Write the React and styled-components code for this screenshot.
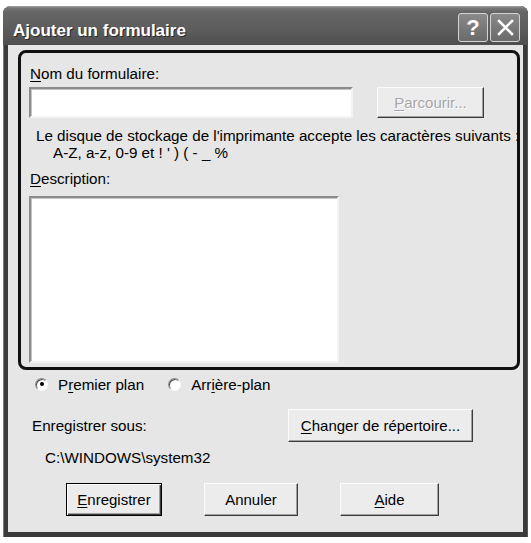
import React from "react";
import styled, { createGlobalStyle } from "styled-components";

const GlobalStyle = createGlobalStyle`
  html, body {
    margin: 0;
    padding: 0;
    background: #ffffff;
  }
  body {
    font-family: "Liberation Sans", Arial, sans-serif;
    font-size: 15.2px;
    color: #000;
  }
`;

const Window = styled.div`
  margin: 6px 0 0 3px;
  width: 525px;
  height: 531px;
  display: flex;
  flex-direction: column;
  background: #3a3a3a;
  border-radius: 8px 8px 0 0;
  overflow: hidden;
  box-shadow: inset 1px 0 0 #7a7a7a, inset -1px 0 0 #555;
`;

const TitleBar = styled.div`
  height: 39px;
  flex: none;
  display: flex;
  align-items: flex-start;
  padding: 0 8px 0 10px;
  background: linear-gradient(
    #a8a8a8 0,
    #767676 2px,
    #666 6px,
    #5c5c5c 24px,
    #4e4e4e 39px
  );
`;

const Title = styled.span`
  margin-top: 15px;
  font: bold 17px/20px "Liberation Sans", Arial, sans-serif;
  color: #fff;
  text-shadow: 1px 1px 0 #2a2a2a;
`;

const TitleButtons = styled.div`
  margin-left: auto;
  margin-top: 7px;
  display: flex;
  gap: 2px;
`;

const CaptionButton = styled.div`
  width: 30px;
  height: 29px;
  box-sizing: border-box;
  border: 1px solid #d4d4d4;
  border-radius: 3px;
  background: linear-gradient(#8a8a8a, #6a6a6a);
  display: flex;
  align-items: center;
  justify-content: center;
  color: #fff;
  font: bold 22px/1 "Liberation Sans", Arial, sans-serif;
`;

const Body = styled.div`
  flex: 1;
  margin: 0 5px 5px;
  background: #e6e6e6;
  padding: 5px 3px 0 10px;
  display: flex;
  flex-direction: column;
`;

const GroupBox = styled.div`
  height: 320px;
  box-sizing: border-box;
  border: 3px solid #111;
  border-radius: 8px;
  padding: 12px 0 4px 8px;
  display: flex;
  flex-direction: column;
  align-items: flex-start;
`;

const Label = styled.div`
  line-height: 17px;
  white-space: nowrap;
  padding-left: ${(p) => p.$indent || 1}px;
  margin-top: ${(p) => p.$top || 0}px;
`;

const Key = styled.span`
  text-decoration: underline;
  text-underline-offset: 2px;
`;

const FieldRow = styled.div`
  margin-top: 5px;
  display: flex;
  gap: 24px;
`;

const Sunken = styled.div`
  width: ${(p) => p.$w}px;
  height: ${(p) => p.$h}px;
  box-sizing: border-box;
  background: #fff;
  border: 2px solid;
  border-color: #8c8c8c #f4f4f4 #f4f4f4 #8c8c8c;
  box-shadow: inset 1px 1px 0 #c4c4c4;
  margin-top: ${(p) => p.$top || 0}px;
`;

const Button = styled.button`
  width: ${(p) => p.$w}px;
  height: ${(p) => p.$h || 33}px;
  padding: 0;
  box-sizing: border-box;
  font: 15px "Liberation Sans", Arial, sans-serif;
  background: #ececec;
  color: ${(p) => (p.disabled ? "#a6a6a6" : "#000")};
  text-shadow: ${(p) => (p.disabled ? "1px 1px 0 #fff" : "none")};
  border: 1px solid;
  border-color: ${(p) =>
    p.$default ? "#000" : "#fcfcfc #3c3c3c #3c3c3c #fcfcfc"};
  box-shadow: ${(p) =>
    p.$default
      ? "inset 1px 1px 0 #fff, inset -1px -1px 0 #3c3c3c, inset -2px -2px 0 #a0a0a0"
      : "inset -1px -1px 0 #a0a0a0"};
`;

const RadioRow = styled.div`
  margin-top: 4px;
  height: 20px;
  padding-left: 17px;
  display: flex;
  align-items: center;
`;

const RadioItem = styled.label`
  display: flex;
  align-items: center;
  gap: 10px;
  margin-right: ${(p) => p.$gap || 0}px;
  line-height: 17px;
`;

const RadioDot = styled.span`
  width: 13px;
  height: 13px;
  box-sizing: border-box;
  border-radius: 50%;
  background: #fff;
  border: 1px solid;
  border-color: #8a8a8a #fafafa #fafafa #8a8a8a;
  box-shadow: inset 1px 1px 0 #505050;
  display: flex;
  align-items: center;
  justify-content: center;
  &::after {
    content: "";
    width: 4px;
    height: 4px;
    border-radius: 50%;
    background: ${(p) => (p.$checked ? "#000" : "transparent")};
  }
`;

const SaveRow = styled.div`
  margin-top: 15px;
  padding-left: 14px;
  display: flex;
  align-items: center;
`;

const SaveLabel = styled.div`
  width: 256px;
  line-height: 17px;
`;

const Path = styled.div`
  margin-top: 7px;
  padding-left: 27px;
  line-height: 17px;
`;

const ActionRow = styled.div`
  margin-top: 17px;
  padding-left: 48px;
  display: flex;
  gap: 42px;
`;

export default function App() {
  return (
    <>
      <GlobalStyle />
      <Window>
        <TitleBar>
          <Title>Ajouter un formulaire</Title>
          <TitleButtons>
            <CaptionButton>?</CaptionButton>
            <CaptionButton>
              <svg width="17" height="17" viewBox="0 0 17 17">
                <path
                  d="M2 2 L15 15 M15 2 L2 15"
                  stroke="#fff"
                  strokeWidth="2.6"
                  strokeLinecap="square"
                />
              </svg>
            </CaptionButton>
          </TitleButtons>
        </TitleBar>
        <Body>
          <GroupBox>
            <Label>
              <Key>N</Key>om du formulaire:
            </Label>
            <FieldRow>
              <Sunken $w={324} $h={31} />
              <Button $w={107} $h={31} disabled>
                <Key>P</Key>arcourir...
              </Button>
            </FieldRow>
            <Label $indent={7} $top={9}>
              Le disque de stockage de l'imprimante accepte les caractères suivants :
            </Label>
            <Label $indent={24}>A-Z, a-z, 0-9 et ! ' ) ( - _ %</Label>
            <Label $top={9}>
              <Key>D</Key>escription:
            </Label>
            <Sunken $w={310} $h={167} $top={9} />
          </GroupBox>
          <RadioRow>
            <RadioItem $gap={24}>
              <RadioDot $checked />
              <span>
                P<Key>r</Key>emier plan
              </span>
            </RadioItem>
            <RadioItem>
              <RadioDot />
              <span>
                Arr<Key>i</Key>ère-plan
              </span>
            </RadioItem>
          </RadioRow>
          <SaveRow>
            <SaveLabel>Enregistrer sous:</SaveLabel>
            <Button $w={185}>
              <Key>C</Key>hanger de répertoire...
            </Button>
          </SaveRow>
          <Path>C:\WINDOWS\system32</Path>
          <ActionRow>
            <Button $w={96} $default>
              <Key>E</Key>nregistrer
            </Button>
            <Button $w={94}>Annuler</Button>
            <Button $w={99}>
              <Key>A</Key>ide
            </Button>
          </ActionRow>
        </Body>
      </Window>
    </>
  );
}
